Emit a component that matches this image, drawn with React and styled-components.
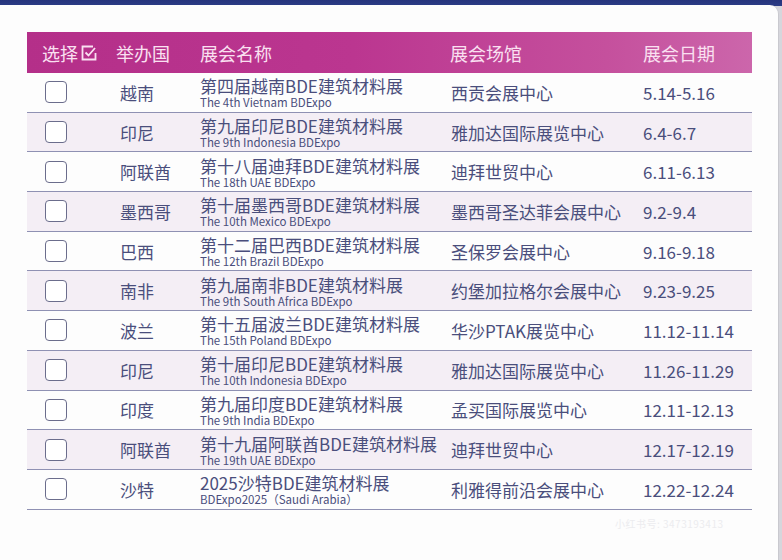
import styled, { createGlobalStyle } from 'styled-components';

const GlobalStyle = createGlobalStyle`
  html, body {
    margin: 0;
    padding: 0;
    background: linear-gradient(180deg, #26347c 0px, #2c3c86 6px, #d6d6dc 6px);
    font-family: "Noto Sans CJK SC", "Noto Sans", sans-serif;
  }
`;

const rows = [
  { country: '越南', name: '第四届越南BDE建筑材料展', en: 'The 4th Vietnam BDExpo', venue: '西贡会展中心', date: '5.14-5.16' },
  { country: '印尼', name: '第九届印尼BDE建筑材料展', en: 'The 9th Indonesia BDExpo', venue: '雅加达国际展览中心', date: '6.4-6.7' },
  { country: '阿联酋', name: '第十八届迪拜BDE建筑材料展', en: 'The 18th UAE BDExpo', venue: '迪拜世贸中心', date: '6.11-6.13' },
  { country: '墨西哥', name: '第十届墨西哥BDE建筑材料展', en: 'The 10th Mexico BDExpo', venue: '墨西哥圣达菲会展中心', date: '9.2-9.4' },
  { country: '巴西', name: '第十二届巴西BDE建筑材料展', en: 'The 12th Brazil BDExpo', venue: '圣保罗会展中心', date: '9.16-9.18' },
  { country: '南非', name: '第九届南非BDE建筑材料展', en: 'The 9th South Africa BDExpo', venue: '约堡加拉格尔会展中心', date: '9.23-9.25' },
  { country: '波兰', name: '第十五届波兰BDE建筑材料展', en: 'The 15th Poland BDExpo', venue: '华沙PTAK展览中心', date: '11.12-11.14' },
  { country: '印尼', name: '第十届印尼BDE建筑材料展', en: 'The 10th Indonesia BDExpo', venue: '雅加达国际展览中心', date: '11.26-11.29' },
  { country: '印度', name: '第九届印度BDE建筑材料展', en: 'The 9th India BDExpo', venue: '孟买国际展览中心', date: '12.11-12.13' },
  { country: '阿联酋', name: '第十九届阿联酋BDE建筑材料展', en: 'The 19th UAE BDExpo', venue: '迪拜世贸中心', date: '12.17-12.19' },
  { country: '沙特', name: '2025沙特BDE建筑材料展', en: 'BDExpo2025（Saudi Arabia）', venue: '利雅得前沿会展中心', date: '12.22-12.24' },
];

const Card = styled.div`
  position: relative;
  margin-top: 5px;
  width: 779px;
  height: 555px;
  background: #fdfdfd;
  border-right: 1px solid #c9c9cf;
  border-top-right-radius: 9px;
  padding: 27px 0 0 27px;
  box-sizing: border-box;
`;

const Table = styled.div`
  width: 725px;
  display: grid;
  grid-template-columns: 78px 95px 245px 185px 122px;
`;

const HeadStrip = styled.div`
  grid-column: 1 / -1;
  display: grid;
  grid-template-columns: subgrid;
  background: linear-gradient(90deg, #b42f89 0%, #bb3690 45%, #c5509d 80%, #cc66ab 100%);
`;

const HeadText = styled.div`
  height: 41px;
  display: flex;
  align-items: center;
  gap: 3px;
  padding-left: ${p => p.$pad}px;
  color: #fae0f1;
  font-size: 18px;
`;

const Row = styled.div`
  grid-column: 1 / -1;
  display: grid;
  grid-template-columns: subgrid;
  height: 39.7px;
  box-sizing: border-box;
  border-bottom: 1.6px solid #8f91b3;
  background: ${p => (p.$shaded ? '#f4eef5' : 'transparent')};
`;

const Cell = styled.div`
  display: flex;
  flex-direction: column;
  justify-content: center;
  padding-left: ${p => p.$pad}px;
  color: #4a4e7c;
  font-size: 17px;
  white-space: nowrap;
`;

const Box = styled.span`
  width: 20px;
  height: 20px;
  border: 1.5px solid #6b6d8c;
  border-radius: 4px;
  background: #fff;
`;

const Title = styled.span`
  font-size: 17px;
  line-height: 20px;
  margin-top: 1px;
`;

const Sub = styled.span`
  font-size: 11.5px;
  line-height: 13px;
`;

const Watermark = styled.div`
  position: absolute;
  left: 615px;
  top: 511px;
  font-size: 10px;
  color: #ececef;
  letter-spacing: 0.5px;
`;

const CheckIcon = () => (
  <svg width="16" height="16" viewBox="0 0 16 16">
    <path d="M12 1.5H1.5v13h13V8" fill="none" stroke="#fae0f1" strokeWidth="1.8" />
    <path d="M4.5 7.5l3 3 6.5-7.5" fill="none" stroke="#fae0f1" strokeWidth="1.8" />
  </svg>
);

export default function App() {
  return (
    <>
      <GlobalStyle />
      <Card>
        <Table>
          <HeadStrip>
            <HeadText $pad={15}>选择<CheckIcon /></HeadText>
            <HeadText $pad={11}>举办国</HeadText>
            <HeadText $pad={0}>展会名称</HeadText>
            <HeadText $pad={5}>展会场馆</HeadText>
            <HeadText $pad={13}>展会日期</HeadText>
          </HeadStrip>
          {rows.map((r, i) => (
            <Row key={i} $shaded={i % 2 === 1}>
              <Cell $pad={18}><Box /></Cell>
              <Cell $pad={15}>{r.country}</Cell>
              <Cell $pad={0}>
                <Title>{r.name}</Title>
                <Sub>{r.en}</Sub>
              </Cell>
              <Cell $pad={6}>{r.venue}</Cell>
              <Cell $pad={13}>{r.date}</Cell>
            </Row>
          ))}
        </Table>
        <Watermark>小红书号: 3473193413</Watermark>
      </Card>
    </>
  );
}
